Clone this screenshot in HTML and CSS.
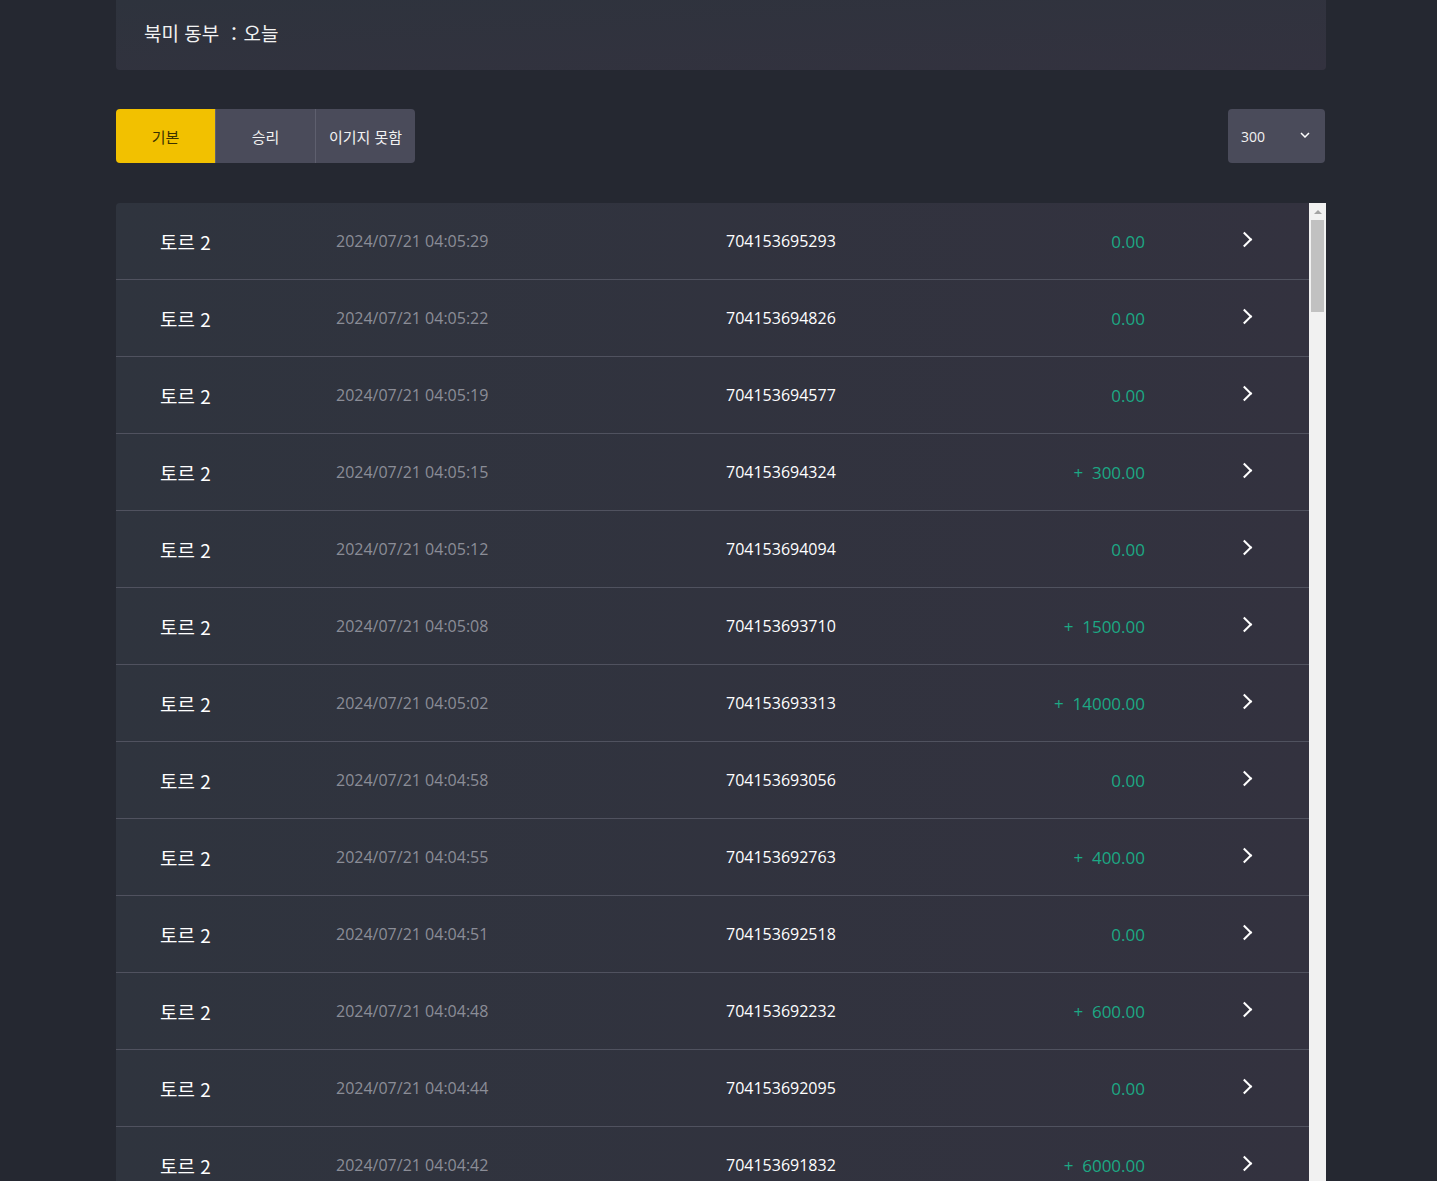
FILE: index.html
```
<!DOCTYPE html>
<html lang="ko">
<head>
    <meta charset="UTF-8">
    <meta name="viewport" content="width=device-width, initial-scale=1.0">
    <title>기록</title>
    <link rel="stylesheet" href="styles.css">
</head>
<body>
    <div class="wrap">
        <div class="region-card">북미 동부 ：오늘</div>

        <div class="toolbar">
            <div class="tabs">
                <button class="tab active">기본</button>
                <button class="tab">승리</button>
                <button class="tab">이기지 못함</button>
            </div>
            <div class="size-select">
                <span>300</span>
                <svg width="10" height="6" viewBox="0 0 10 6"><polyline points="1,1 5,5 9,1" fill="none" stroke="#fff" stroke-width="1.5"/></svg>
            </div>
        </div>

        <div class="record-box">
            <div class="record-list">
                <div class="row"><span class="name">토르 2</span><span class="time">2024/07/21 04:05:29</span><span class="no">704153695293</span><span class="amount">0.00</span><span class="arrow"></span></div>
                <div class="row"><span class="name">토르 2</span><span class="time">2024/07/21 04:05:22</span><span class="no">704153694826</span><span class="amount">0.00</span><span class="arrow"></span></div>
                <div class="row"><span class="name">토르 2</span><span class="time">2024/07/21 04:05:19</span><span class="no">704153694577</span><span class="amount">0.00</span><span class="arrow"></span></div>
                <div class="row"><span class="name">토르 2</span><span class="time">2024/07/21 04:05:15</span><span class="no">704153694324</span><span class="amount">+&nbsp; 300.00</span><span class="arrow"></span></div>
                <div class="row"><span class="name">토르 2</span><span class="time">2024/07/21 04:05:12</span><span class="no">704153694094</span><span class="amount">0.00</span><span class="arrow"></span></div>
                <div class="row"><span class="name">토르 2</span><span class="time">2024/07/21 04:05:08</span><span class="no">704153693710</span><span class="amount">+&nbsp; 1500.00</span><span class="arrow"></span></div>
                <div class="row"><span class="name">토르 2</span><span class="time">2024/07/21 04:05:02</span><span class="no">704153693313</span><span class="amount">+&nbsp; 14000.00</span><span class="arrow"></span></div>
                <div class="row"><span class="name">토르 2</span><span class="time">2024/07/21 04:04:58</span><span class="no">704153693056</span><span class="amount">0.00</span><span class="arrow"></span></div>
                <div class="row"><span class="name">토르 2</span><span class="time">2024/07/21 04:04:55</span><span class="no">704153692763</span><span class="amount">+&nbsp; 400.00</span><span class="arrow"></span></div>
                <div class="row"><span class="name">토르 2</span><span class="time">2024/07/21 04:04:51</span><span class="no">704153692518</span><span class="amount">0.00</span><span class="arrow"></span></div>
                <div class="row"><span class="name">토르 2</span><span class="time">2024/07/21 04:04:48</span><span class="no">704153692232</span><span class="amount">+&nbsp; 600.00</span><span class="arrow"></span></div>
                <div class="row"><span class="name">토르 2</span><span class="time">2024/07/21 04:04:44</span><span class="no">704153692095</span><span class="amount">0.00</span><span class="arrow"></span></div>
                <div class="row"><span class="name">토르 2</span><span class="time">2024/07/21 04:04:42</span><span class="no">704153691832</span><span class="amount">+&nbsp; 6000.00</span><span class="arrow"></span></div>
            </div>
            <div class="scrollbar">
                <div class="scroll-up"></div>
                <div class="scroll-thumb"></div>
            </div>
        </div>
    </div>
</body>
</html>
```

FILE: styles.css
```
html, body {
    height: 100%;
}
body {
    margin: 0;
    background-color: #252831;
    color: #fff;
    font-family: 'Open Sans', 'Noto Sans CJK KR', sans-serif;
    overflow: hidden;
}
.wrap {
    width: 1210px;
    margin-left: 116px;
}
.region-card {
    height: 70px;
    box-sizing: border-box;
    padding: 0 28px 6px;
    display: flex;
    align-items: center;
    font-family: 'Noto Sans CJK KR', sans-serif;
    font-size: 19px;
    color: #f2f2f2;
    background: linear-gradient(to bottom right, #2e333d, #33323f);
    border-radius: 0 0 4px 4px;
}
.toolbar {
    display: flex;
    justify-content: space-between;
    margin-top: 39px;
}
.tabs {
    display: flex;
    border-radius: 4px;
    overflow: hidden;
}
.tab {
    width: 100px;
    height: 54px;
    border: none;
    border-left: 1px solid #5e5f6e;
    background: #4a4b5a;
    color: #f2f2f2;
    font-family: 'Noto Sans CJK KR', sans-serif;
    font-size: 15px;
    padding: 0;
}
.tab.active {
    width: 99px;
    border-left: none;
    background: #f2c100;
    color: #3b3100;
}
.size-select {
    width: 97px;
    height: 54px;
    box-sizing: border-box;
    padding: 0 15px 0 13px;
    margin-right: 1px;
    display: flex;
    align-items: center;
    justify-content: space-between;
    background: #4a4b5a;
    border-radius: 4px;
    font-size: 14px;
    color: #f2f2f2;
}
.size-select svg {
    margin-top: -2px;
}
.record-box {
    display: flex;
    margin-top: 40px;
    height: calc(100vh - 203px);
}
.record-list {
    flex: 1;
    overflow: hidden;
    border-radius: 4px 0 0 0;
}
.scrollbar {
    width: 17px;
    background: #f1f1f1;
    display: flex;
    flex-direction: column;
    align-items: center;
}
.scroll-up {
    width: 0;
    height: 0;
    margin-top: 7px;
    border-left: 4px solid transparent;
    border-right: 4px solid transparent;
    border-bottom: 4px solid #a3a3a3;
}
.scroll-thumb {
    width: 13px;
    height: 92px;
    margin-top: 6px;
    background: #c1c1c1;
}
.row {
    display: flex;
    align-items: center;
    height: 77px;
    box-sizing: border-box;
    padding-left: 44px;
    border-bottom: 1px solid #50525f;
    background: linear-gradient(to right, #2f343e, #33323f);
    font-size: 16px;
}
.name {
    width: 176px;
    font-family: 'Noto Sans CJK KR', sans-serif;
    font-size: 19px;
    color: #fff;
}
.time {
    width: 390px;
    color: #8b8d97;
}
.no {
    width: 200px;
    color: #fff;
}
.amount {
    width: 219px;
    text-align: right;
    font-size: 17px;
    color: #1ca884;
}
.arrow {
    width: 9px;
    height: 9px;
    margin-left: 94px;
    margin-top: -4px;
    border-top: 2px solid #fff;
    border-right: 2px solid #fff;
    transform: rotate(45deg);
}
```
